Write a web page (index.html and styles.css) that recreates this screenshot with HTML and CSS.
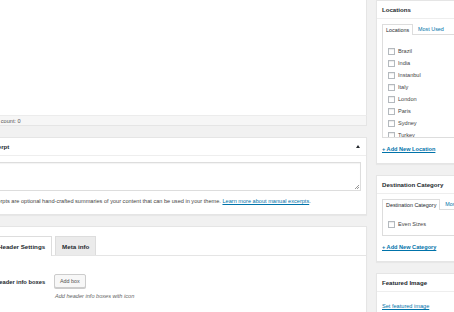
FILE: index.html
```html
<!DOCTYPE html>
<html lang="en">
<head>
    <meta charset="UTF-8">
    <meta name="viewport" content="width=device-width, initial-scale=1.0">
    <title>Edit Destination</title>
    <link rel="stylesheet" href="styles.css">
</head>
<body>
    <div class="wrap">
        <div class="main">
            <div class="editor"></div>
            <div class="status">Word count: 0</div>

            <div class="postbox">
                <div class="pb-head">
                    <h2>Excerpt</h2>
                    <span class="toggle"></span>
                </div>
                <div class="pb-inside">
                    <div class="textarea"></div>
                    <p class="desc">Excerpts are optional hand-crafted summaries of your content that can be used in your theme. <a href="#">Learn more about manual excerpts</a>.</p>
                </div>
            </div>

            <div class="postbox tabbox">
                <div class="tab-nav">
                    <span class="tab active">Header Settings</span>
                    <span class="tab">Meta info</span>
                </div>
                <div class="field">
                    <label>Header info boxes</label>
                    <div class="field-body">
                        <button class="btn">Add box</button>
                        <p class="help">Add header info boxes with icon</p>
                    </div>
                </div>
            </div>
        </div>

        <div class="side">
            <div class="postbox sbox">
                <div class="pb-head"><h2>Locations</h2></div>
                <div class="sb-inside">
                    <div class="cat-tabs">
                        <span class="ctab active">Locations</span>
                        <a class="ctab" href="#">Most Used</a>
                    </div>
                    <ul class="cat-panel tall">
                        <li><span class="check"></span>Brazil</li>
                        <li><span class="check"></span>India</li>
                        <li><span class="check"></span>Instanbul</li>
                        <li><span class="check"></span>Italy</li>
                        <li><span class="check"></span>London</li>
                        <li><span class="check"></span>Paris</li>
                        <li><span class="check"></span>Sydney</li>
                        <li><span class="check"></span>Turkey</li>
                    </ul>
                    <a class="add-new" href="#">+ Add New Location</a>
                </div>
            </div>

            <div class="postbox sbox">
                <div class="pb-head"><h2>Destination Category</h2></div>
                <div class="sb-inside">
                    <div class="cat-tabs">
                        <span class="ctab active">Destination Category</span>
                        <a class="ctab" href="#">Most Used</a>
                    </div>
                    <ul class="cat-panel">
                        <li><span class="check"></span>Even Sizes</li>
                    </ul>
                    <a class="add-new" href="#">+ Add New Category</a>
                </div>
            </div>

            <div class="postbox sbox">
                <div class="pb-head"><h2>Featured Image</h2></div>
                <div class="sb-inside">
                    <a class="plain-link" href="#">Set featured image</a>
                </div>
            </div>
        </div>
    </div>
</body>
</html>
```

FILE: styles.css
```css
body {
    margin: 0;
    background: #f1f1f1;
    color: #23282d;
    font-family: 'Liberation Sans', Arial, sans-serif;
    font-size: 5.6px;
    overflow: hidden;
    height: 312px;
}
a {
    color: #0073aa;
}
.wrap {
    display: flex;
    align-items: flex-start;
}
.main {
    flex: 0 0 385px;
    margin-left: -18px;
}
.side {
    flex: 0 0 150px;
    margin-left: 9px;
}
.editor {
    height: 115px;
    background: #fff;
    border-right: 1px solid #e5e5e5;
    box-sizing: border-box;
}
.status {
    height: 11px;
    line-height: 10px;
    padding-left: 3px;
    background: #f6f6f6;
    border: 1px solid #e5e5e5;
    border-top-color: #ececec;
    box-sizing: border-box;
    color: #555;
    margin-bottom: 11px;
}
.postbox {
    background: #fff;
    border: 1px solid #e5e5e5;
    box-shadow: 0 1px 1px rgba(0, 0, 0, 0.04);
    margin-bottom: 11px;
}
.pb-head {
    height: 17px;
    display: flex;
    align-items: center;
    justify-content: space-between;
    border-bottom: 1px solid #eee;
    padding: 0 6px 0 4px;
}
.pb-head h2 {
    margin: 0;
    font-size: 6.1px;
    font-weight: bold;
    color: #23282d;
}
.toggle {
    width: 0;
    height: 0;
    border-left: 2px solid transparent;
    border-right: 2px solid transparent;
    border-bottom: 3px solid #23282d;
}
.pb-inside {
    padding: 6px 5px 0 5px;
}
.textarea {
    height: 27px;
    border: 1px solid #ddd;
    box-shadow: inset 0 1px 1px rgba(0, 0, 0, 0.05);
    position: relative;
}
.textarea::after {
    content: '';
    position: absolute;
    right: 1px;
    bottom: 1px;
    width: 4px;
    height: 4px;
    background: linear-gradient(135deg, transparent 45%, #999 45%, #999 55%, transparent 55%, transparent 70%, #999 70%, #999 80%, transparent 80%);
}
.desc {
    margin: 0;
    padding: 7px 0 10px;
    line-height: 6px;
    color: #444;
}
.tabbox {
    padding-top: 9px;
    height: 120px;
}
.tab-nav {
    display: flex;
    gap: 3px;
    padding-left: 8px;
    border-bottom: 1px solid #e5e5e5;
    height: 19px;
}
.tab {
    display: flex;
    align-items: center;
    padding: 0 6px;
    font-size: 6.2px;
    font-weight: bold;
    background: #ebebeb;
    border: 1px solid #ddd;
    border-bottom: none;
    height: 19px;
    box-sizing: border-box;
}
.tab.active {
    background: #fff;
    height: 20px;
}
.field {
    display: flex;
    padding: 18px 0 0 12px;
}
.field label {
    width: 59px;
    font-weight: bold;
    font-size: 5.8px;
    padding-top: 5px;
}
.btn {
    font-family: inherit;
    font-size: 5.4px;
    color: #555;
    background: #f7f7f7;
    border: 1px solid #ccc;
    border-radius: 2px;
    box-shadow: 0 1px 0 #ccc;
    height: 14px;
    padding: 0 5px;
    margin: 0;
}
.help {
    margin: 5px 0 0 1px;
    font-style: italic;
    color: #666;
}
.sbox .pb-head {
    padding-left: 5px;
}
.sb-inside {
    padding: 5px 5px 11px;
}
.cat-tabs {
    display: flex;
    align-items: flex-end;
    height: 10px;
    gap: 2px;
}
.ctab {
    padding: 0 3px;
    line-height: 10px;
    text-decoration: none;
    font-size: 5.4px;
}
.ctab.active {
    border: 1px solid #ddd;
    border-bottom: none;
    background: #fff;
    position: relative;
    top: 1px;
}
.cat-panel {
    list-style: none;
    margin: 0;
    padding: 8px 5px 5px;
    border: 1px solid #ddd;
    overflow: hidden;
}
.cat-panel.tall {
    height: 104px;
    box-sizing: border-box;
    padding-top: 10px;
}
.cat-panel li {
    display: flex;
    align-items: center;
    height: 12px;
    flex-shrink: 0;
    color: #444;
}
.check {
    width: 7px;
    height: 7px;
    border: 1px solid #b4b9be;
    box-sizing: border-box;
    background: #fff;
    box-shadow: inset 0 1px 1px rgba(0, 0, 0, 0.08);
    margin-right: 3px;
}
.add-new {
    display: block;
    margin-top: 8px;
    font-weight: bold;
}
.plain-link {
    display: block;
    padding: 6px 0 3px;
}
```
